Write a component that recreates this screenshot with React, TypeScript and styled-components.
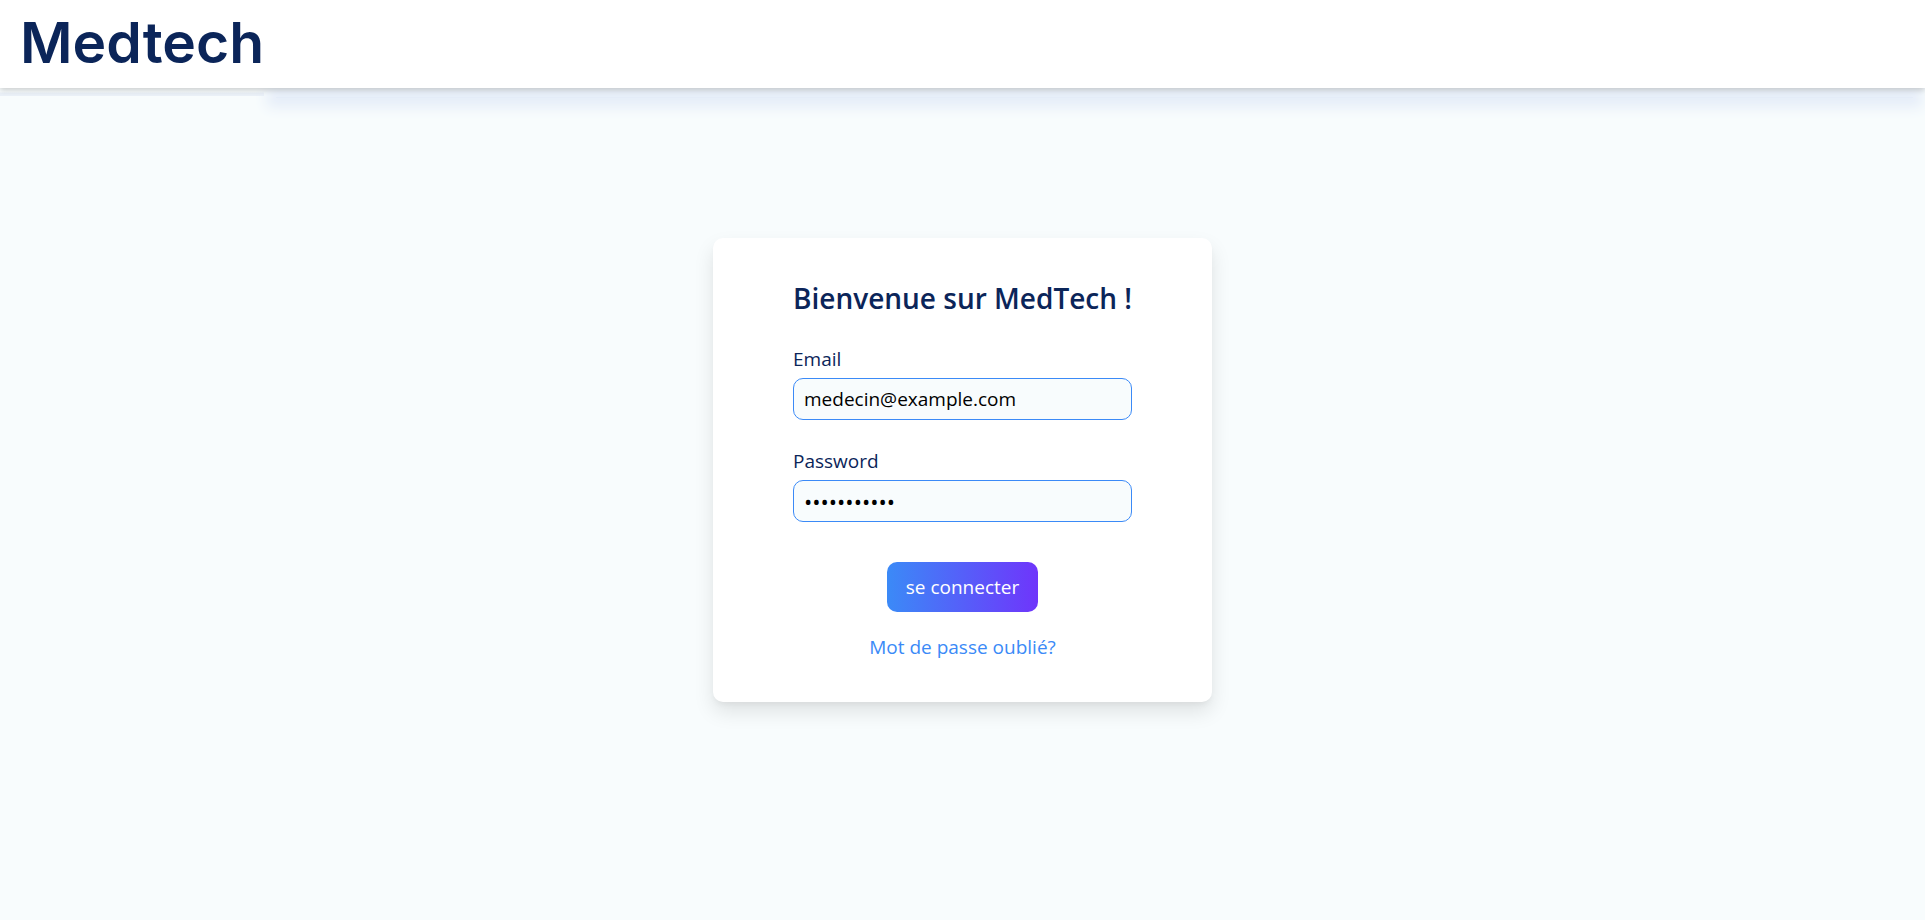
import React from "react";
import styled, { createGlobalStyle } from "styled-components";

const navy = "#0b2559";
const blue = "#3b8af7";
const mist = "#f8fcfd";
const fonts = '"Open Sans", "Noto Sans", sans-serif';

const Global = createGlobalStyle`
  * { box-sizing: border-box; }
  body { margin: 0; background: ${mist}; font-family: ${fonts}; color: ${navy}; }
  h1, h2 { margin: 0; }
`;
const Page = styled.div`
  min-height: 100vh;
  display: flex;
  flex-direction: column;
`;
const Header = styled.header`
  position: relative;
  z-index: 1;
  height: 88px;
  padding: 0 20px;
  background: #fff;
  box-shadow: 0 2px 6px rgba(0, 0, 0, 0.2);
`;
const Logo = styled.h1`
  font: 600 57px/86px Inter, sans-serif;
  color: ${navy};
`;
const Underglow = styled.div`
  display: flex;
  align-items: flex-start;
  height: 18px;
`;
const BrandEdge = styled.div`
  width: 264px;
  height: 8px;
  background: linear-gradient(to bottom, ${mist} 4px, #ebf1f8 5px);
`;
const Glow = styled.div`
  flex: 1;
  height: 1px;
  margin: 9px 12px 0;
  background: #e4ecf8;
  box-shadow: 0 0 14px 9px #e4ecf8;
`;
const Main = styled.main`
  flex: 1;
  display: flex;
  align-items: center;
  justify-content: center;
  padding-bottom: 86px;
`;
const Card = styled.form`
  display: flex;
  flex-direction: column;
  width: 499px;
  padding: 40px 80px;
  background: #fff;
  border-radius: 10px;
  box-shadow: 0 10px 20px rgba(0, 0, 0, 0.1), 0 4px 6px -2px rgba(0, 0, 0, 0.05);
`;
const Title = styled.h2`
  font-size: 28px;
  line-height: 40px;
  font-weight: 600;
  text-align: center;
  white-space: nowrap;
`;
const Field = styled.div`
  display: flex;
  flex-direction: column;
  gap: 4px;
  margin-top: 26px;
`;
const Label = styled.label`
  font-size: 19px;
  line-height: 30px;
`;
const Input = styled.input`
  height: 42px;
  padding: 0 10px;
  border: 1px solid ${blue};
  border-radius: 10px;
  background: ${mist};
  color: #000;
  font-family: ${fonts};
  font-size: ${(p) => (p.type === "password" ? "22px" : "19px")};
  outline: none;
`;
const Submit = styled.button`
  align-self: center;
  height: 50px;
  margin-top: 40px;
  padding: 0 19px;
  border: 0;
  border-radius: 10px;
  background: linear-gradient(to right, ${blue}, #6f35fb);
  color: #fff;
  font: 19px/30px ${fonts};
`;
const Forgot = styled.a`
  align-self: center;
  margin-top: 20px;
  color: ${blue};
  font-size: 19px;
  line-height: 30px;
  text-decoration: none;
`;

export default function App() {
  return (
    <Page>
      <Global />
      <Header>
        <Logo>Medtech</Logo>
      </Header>
      <Underglow>
        <BrandEdge />
        <Glow />
      </Underglow>
      <Main>
        <Card>
          <Title>Bienvenue sur MedTech !</Title>
          <Field>
            <Label htmlFor="email">Email</Label>
            <Input id="email" type="email" defaultValue="medecin@example.com" />
          </Field>
          <Field>
            <Label htmlFor="password">Password</Label>
            <Input id="password" type="password" defaultValue="medecin1234" />
          </Field>
          <Submit type="button">se connecter</Submit>
          <Forgot href="#">Mot de passe oublié?</Forgot>
        </Card>
      </Main>
    </Page>
  );
}
